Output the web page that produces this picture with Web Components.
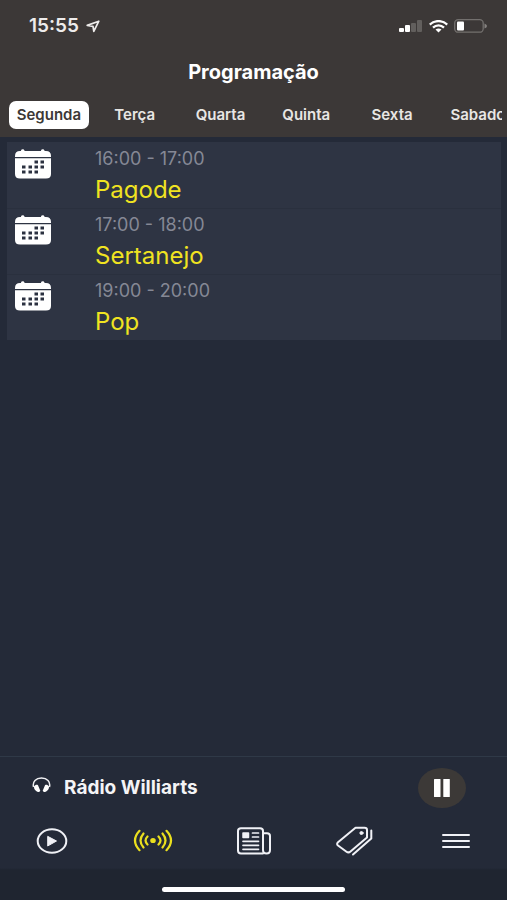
<!DOCTYPE html>
<html lang="pt-BR">
<head>
<meta charset="utf-8">
<meta name="viewport" content="width=device-width, initial-scale=1">
<title>Programação</title>
<style>
html, body { margin: 0; height: 100%; background: #242a38; font-family: Inter, "Liberation Sans", sans-serif; color: #fff; }
</style>
</head>
<body>
<radio-app></radio-app>
<script>
function define(name, html, setup) {
  customElements.define(name, class extends HTMLElement {
    constructor() {
      super();
      this.attachShadow({ mode: 'open' }).innerHTML = html;
    }
    connectedCallback() { if (setup) setup(this, this.shadowRoot); }
  });
}

define('status-bar', `
<style>
:host { display: flex; align-items: center; justify-content: space-between; height: 52px; padding: 0 20px 0 29px; color: #eeeceb; }
div { display: flex; align-items: center; }
.left { gap: 7px; font-size: 19px; line-height: 24px; font-weight: 600; }
.right { gap: 6px; }
svg { display: block; }
</style>
<div class="left"><span>15:55</span>
<svg width="14" height="13" viewBox="0 0 14 13" fill="none" stroke="#eeeceb" stroke-width="1.7" stroke-linejoin="round"><path d="M12.800 1.200 1.200 5.400 7 6.300 7.800 11.400Z"/></svg></div>
<div class="right">
<svg width="24" height="13" viewBox="0 0 24 13"><rect y="8" width="5" height="4" rx="1" fill="#fff"/><rect x="6" y="5" width="5" height="7" rx="1" fill="#fff"/><rect x="12" y="3" width="5" height="9" rx="1" fill="#625f5d"/><rect x="18" width="5" height="12" rx="1" fill="#625f5d"/></svg>
<svg width="19" height="13" viewBox="0 0 19 13" fill="none" stroke="#fff" stroke-width="2.300"><path d="M.8 4.600C5.500-.1 13.500-.1 18.200 4.600M4 7.700C7.200 4.700 11.800 4.700 15 7.700"/><path d="M6.500 9.600Q9.500 7.200 12.500 9.600L9.500 12.500Z" fill="#fff" stroke="none"/></svg>
<svg width="33" height="14" viewBox="0 0 33 14"><rect x=".7" y=".7" width="28.500" height="12.500" rx="3.500" fill="none" stroke="#73706e" stroke-width="1.300"/><rect x="3" y="2.500" width="7" height="9" rx="1" fill="#fff"/><path d="M30.500 4.500Q33 5.500 33 7T30.500 9.500Z" fill="#858280"/></svg>
</div>`);

define('day-tab', `
<style>
:host { display: flex; justify-content: center; }
button { font: 600 15px/28px Inter, "Liberation Sans", sans-serif; height: 28px; padding: 0 8px; border: 0; border-radius: 7px; background: none; color: #e8e6e4; white-space: nowrap; }
:host([selected]) button { background: #fff; color: #3c3836; }
</style>
<button type="button" role="tab"><slot></slot></button>`, (el, root) => {
  root.querySelector('button').setAttribute('aria-selected', el.hasAttribute('selected'));
});

define('app-header', `
<style>
:host { display: block; background: #3c3837; padding-bottom: 8px; }
h1 { margin: 0; padding: 7px 0 15px; font-size: 20px; line-height: 26px; font-weight: 700; text-align: center; }
nav { display: grid; grid-auto-flow: column; grid-auto-columns: 17.3%; overflow: hidden; margin: 0 5px 0 6px; padding-top: 1px; }
</style>
<status-bar></status-bar>
<h1>Programação</h1>
<nav role="tablist" aria-label="Dias da semana">
<day-tab selected>Segunda</day-tab><day-tab>Terça</day-tab><day-tab>Quarta</day-tab><day-tab>Quinta</day-tab><day-tab>Sexta</day-tab><day-tab>Sabado</day-tab>
</nav>`);

define('program-item', `
<style>
:host { display: grid; grid-template-columns: 80px 1fr; box-sizing: border-box; height: 66px; padding: 7px 8px 0; background: #2e3443; }
:host(:not(:first-child)) { box-shadow: inset 0 1px #2a303e; }
svg { display: block; }
.time { font-size: 18px; line-height: 20px; color: #858895; }
.name { font-size: 24px; line-height: 28px; margin-top: 7px; color: #f0e321; }
.time, .name { display: block; }
</style>
<svg width="36" height="30" viewBox="0 0 36 30">
<path fill="#fff" d="M0 7Q0 2 5 2H6V1.500A1.800 1.500 0 0 1 9.500 1.500V2H26V1.500A1.800 1.500 0 0 1 29.500 1.500V2H31Q36 2 36 7V8H0ZM0 9.300H36V25Q36 29.500 31 29.500H5Q0 29.500 0 25Z"/>
<g fill="#2b3140"><rect x="19.500" y="11.500" width="3.500" height="3"/><rect x="25.500" y="11.500" width="3.500" height="3"/><rect x="7" y="16.500" width="3.500" height="3"/><rect x="13.500" y="16.500" width="3.500" height="3"/><rect x="19.500" y="16.500" width="3.500" height="3"/><rect x="25.500" y="16.500" width="3.500" height="3"/><rect x="7" y="21.500" width="3.500" height="3"/><rect x="13.500" y="21.500" width="3.500" height="3"/><rect x="19.500" y="21.500" width="3.500" height="3"/></g></svg>
<div><slot name="time" class="time"></slot><slot class="name"></slot></div>`);

define('now-playing', `
<style>
:host { display: flex; align-items: center; height: 61px; padding: 0 41px 0 32px; border-top: 1px solid #2f3947; }
svg { display: block; }
.phones { margin-bottom: 6px; }
strong { flex: 1; margin-left: 13px; font-size: 19px; line-height: 24px; font-weight: 700; color: #f4f4f6; }
button { display: grid; place-items: center; width: 48px; height: 40px; padding: 0; border: 0; border-radius: 50%; background: #3c3937; }
</style>
<svg class="phones" width="19" height="16" viewBox="0 0 19 16"><path d="M1.500 10C.3 4.500 4 1 9.500 1S18.700 4.500 17.500 10" fill="none" stroke="#f0f0f3" stroke-width="1.500"/><path d="M2 9.500C3 7.800 5 7.500 6 8.200L8.300 13.800C7.500 15.300 5.500 15.300 4.500 14.300 2.800 13 1.800 11.500 2 9.500ZM17 9.500C16 7.800 14 7.500 13 8.200L10.700 13.800C11.500 15.300 13.500 15.300 14.500 14.300 16.200 13 17.200 11.500 17 9.500Z" fill="#fff"/></svg>
<strong>Rádio Williarts</strong>
<button type="button" aria-label="Pausar"><svg width="16" height="18" viewBox="0 0 16 18" fill="#fff"><rect x="0" width="6.500" height="18" rx=".5"/><rect x="9.300" width="6.500" height="18" rx=".5"/></svg></button>`);

define('bottom-nav', `
<style>
:host { display: block; background: linear-gradient(#242a38 0 50px, #1f2530 52px); }
nav { display: grid; grid-template-columns: repeat(5, 1fr); height: 46px; padding-left: 1px; }
a { display: grid; place-items: center; color: #f0f1f6; }
a.on { color: #eadf1e; }
svg { display: block; fill: none; stroke: currentColor; stroke-linecap: round; stroke-linejoin: round; }
.home { width: 36%; height: 5px; margin: 23px auto 8px; border-radius: 3px; background: #fff; }
</style>
<nav aria-label="Principal">
<a href="#ouvir" aria-label="Ouvir"><svg width="32" height="28" viewBox="0 0 32 28"><ellipse cx="16" cy="14" rx="14.300" ry="11.800" stroke-width="2"/><path d="M12 9.500 20.500 14 12 18.800Z" fill="currentColor"/></svg></a>
<a class="on" href="#programacao" aria-label="Programação"><svg width="40" height="26" viewBox="0 0 40 26" stroke-width="2.200"><ellipse cx="20" cy="12.500" rx="1.700" ry="1.500" fill="currentColor"/><path d="M14.500 8.500Q10.500 12.500 14.500 16.500M10.500 5.500Q4.500 12.500 10.500 19.500M6.500 2.800Q-2.500 12.500 6.500 22.200M25.500 8.500Q29.500 12.500 25.500 16.500M29.500 5.500Q35.500 12.500 29.500 19.500M33.500 2.800Q42.500 12.500 33.500 22.200"/></svg></a>
<a href="#noticias" aria-label="Notícias"><svg width="34" height="28" viewBox="0 0 34 28" stroke-width="2"><path d="M26 26.500H4Q1 26.500 1 23.500V4Q1 1.300 4 1.300H23Q26 1.300 26 4V23Q26 26.500 29.500 26.500T33 23V9Q33 6.300 30 6.300H26"/><path d="M6 6H11.500V10.500H6Z" fill="currentColor" stroke-width="1.500"/><path d="M15.500 6H21.500M15.500 10H21.500M6 14.300H21.500M6 18.300H21.500M6 22.300H21.500" stroke-width="1.700"/></svg></a>
<a href="#ofertas" aria-label="Ofertas"><svg width="38" height="30" viewBox="0 0 38 30" stroke-width="2"><path d="M19.500 1.800H28.500Q31 1.800 31 4V11.500L14.500 25.500Q12.500 27.200 10.500 25.700L2 19.500Q.2 18 2 16.300Z"/><path d="M35.300 4.500V12.500L17 28.500"/><ellipse cx="25.500" cy="7" rx="1.600" ry="1.500" fill="currentColor" stroke-width="1"/></svg></a>
<a href="#menu" aria-label="Menu"><svg width="28" height="16" viewBox="0 0 28 16" stroke-width="2"><path d="M1 2H27M1 8H27M1 14H27"/></svg></a>
</nav>
<div class="home"></div>`);

define('radio-app', `
<style>
:host { display: flex; flex-direction: column; min-height: 100vh; background: #242a38; }
main { flex: 1; padding: 5px 6px 0 7px; }
</style>
<app-header></app-header>
<main>
<program-item><span slot="time">16:00 - 17:00</span>Pagode</program-item>
<program-item><span slot="time">17:00 - 18:00</span>Sertanejo</program-item>
<program-item><span slot="time">19:00 - 20:00</span>Pop</program-item>
</main>
<now-playing></now-playing>
<bottom-nav></bottom-nav>`);
</script>
</body>
</html>
